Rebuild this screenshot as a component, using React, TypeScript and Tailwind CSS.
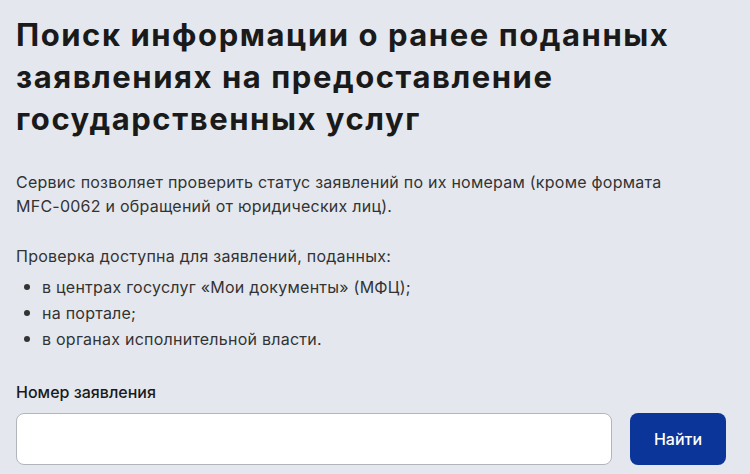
export default function App() {
  return (
    <div className="min-h-[474px] w-full bg-[#e4e8ee] px-4 pt-[14px] font-['Inter',sans-serif] text-[#333]">
      <h1 className="text-[31px] font-bold leading-[42px] tracking-[0.05em] text-[#1a1a1a]">
        Поиск информации о ранее поданных
        <br />
        заявлениях на предоставление
        <br />
        государственных услуг
      </h1>

      <p className="mt-[30px] text-[16px] leading-[24px] tracking-[0.015em]">
        Сервис позволяет проверить статус заявлений по их номерам (кроме формата
        <br />
        MFC-0062 и обращений от юридических лиц).
      </p>

      <p className="mt-[26px] text-[16px] leading-[24px] tracking-[0.015em]">
        Проверка доступна для заявлений, поданных:
      </p>
      <ul className="mt-[6px] text-[16px] leading-[26px] tracking-[0.015em]">
        <li className="flex items-center gap-[12px] pl-[8px]">
          <span className="h-[6px] w-[6px] rounded-full bg-[#333]" />
          в центрах госуслуг «Мои документы» (МФЦ);
        </li>
        <li className="flex items-center gap-[12px] pl-[8px]">
          <span className="h-[6px] w-[6px] rounded-full bg-[#333]" />
          на портале;
        </li>
        <li className="flex items-center gap-[12px] pl-[8px]">
          <span className="h-[6px] w-[6px] rounded-full bg-[#333]" />
          в органах исполнительной власти.
        </li>
      </ul>

      <label className="mt-[28px] block text-[16px] font-medium leading-[24px] text-[#1a1a1a]">
        Номер заявления
      </label>
      <div className="mt-[9px] flex items-stretch gap-[18px]">
        <input
          type="text"
          className="h-[52px] w-[596px] rounded-[8px] border border-[#b1b6bd] bg-white px-3 outline-none"
        />
        <button className="h-[52px] w-[96px] rounded-[8px] bg-[#0b3598] text-[16px] font-medium text-white">
          Найти
        </button>
      </div>
    </div>
  );
}
